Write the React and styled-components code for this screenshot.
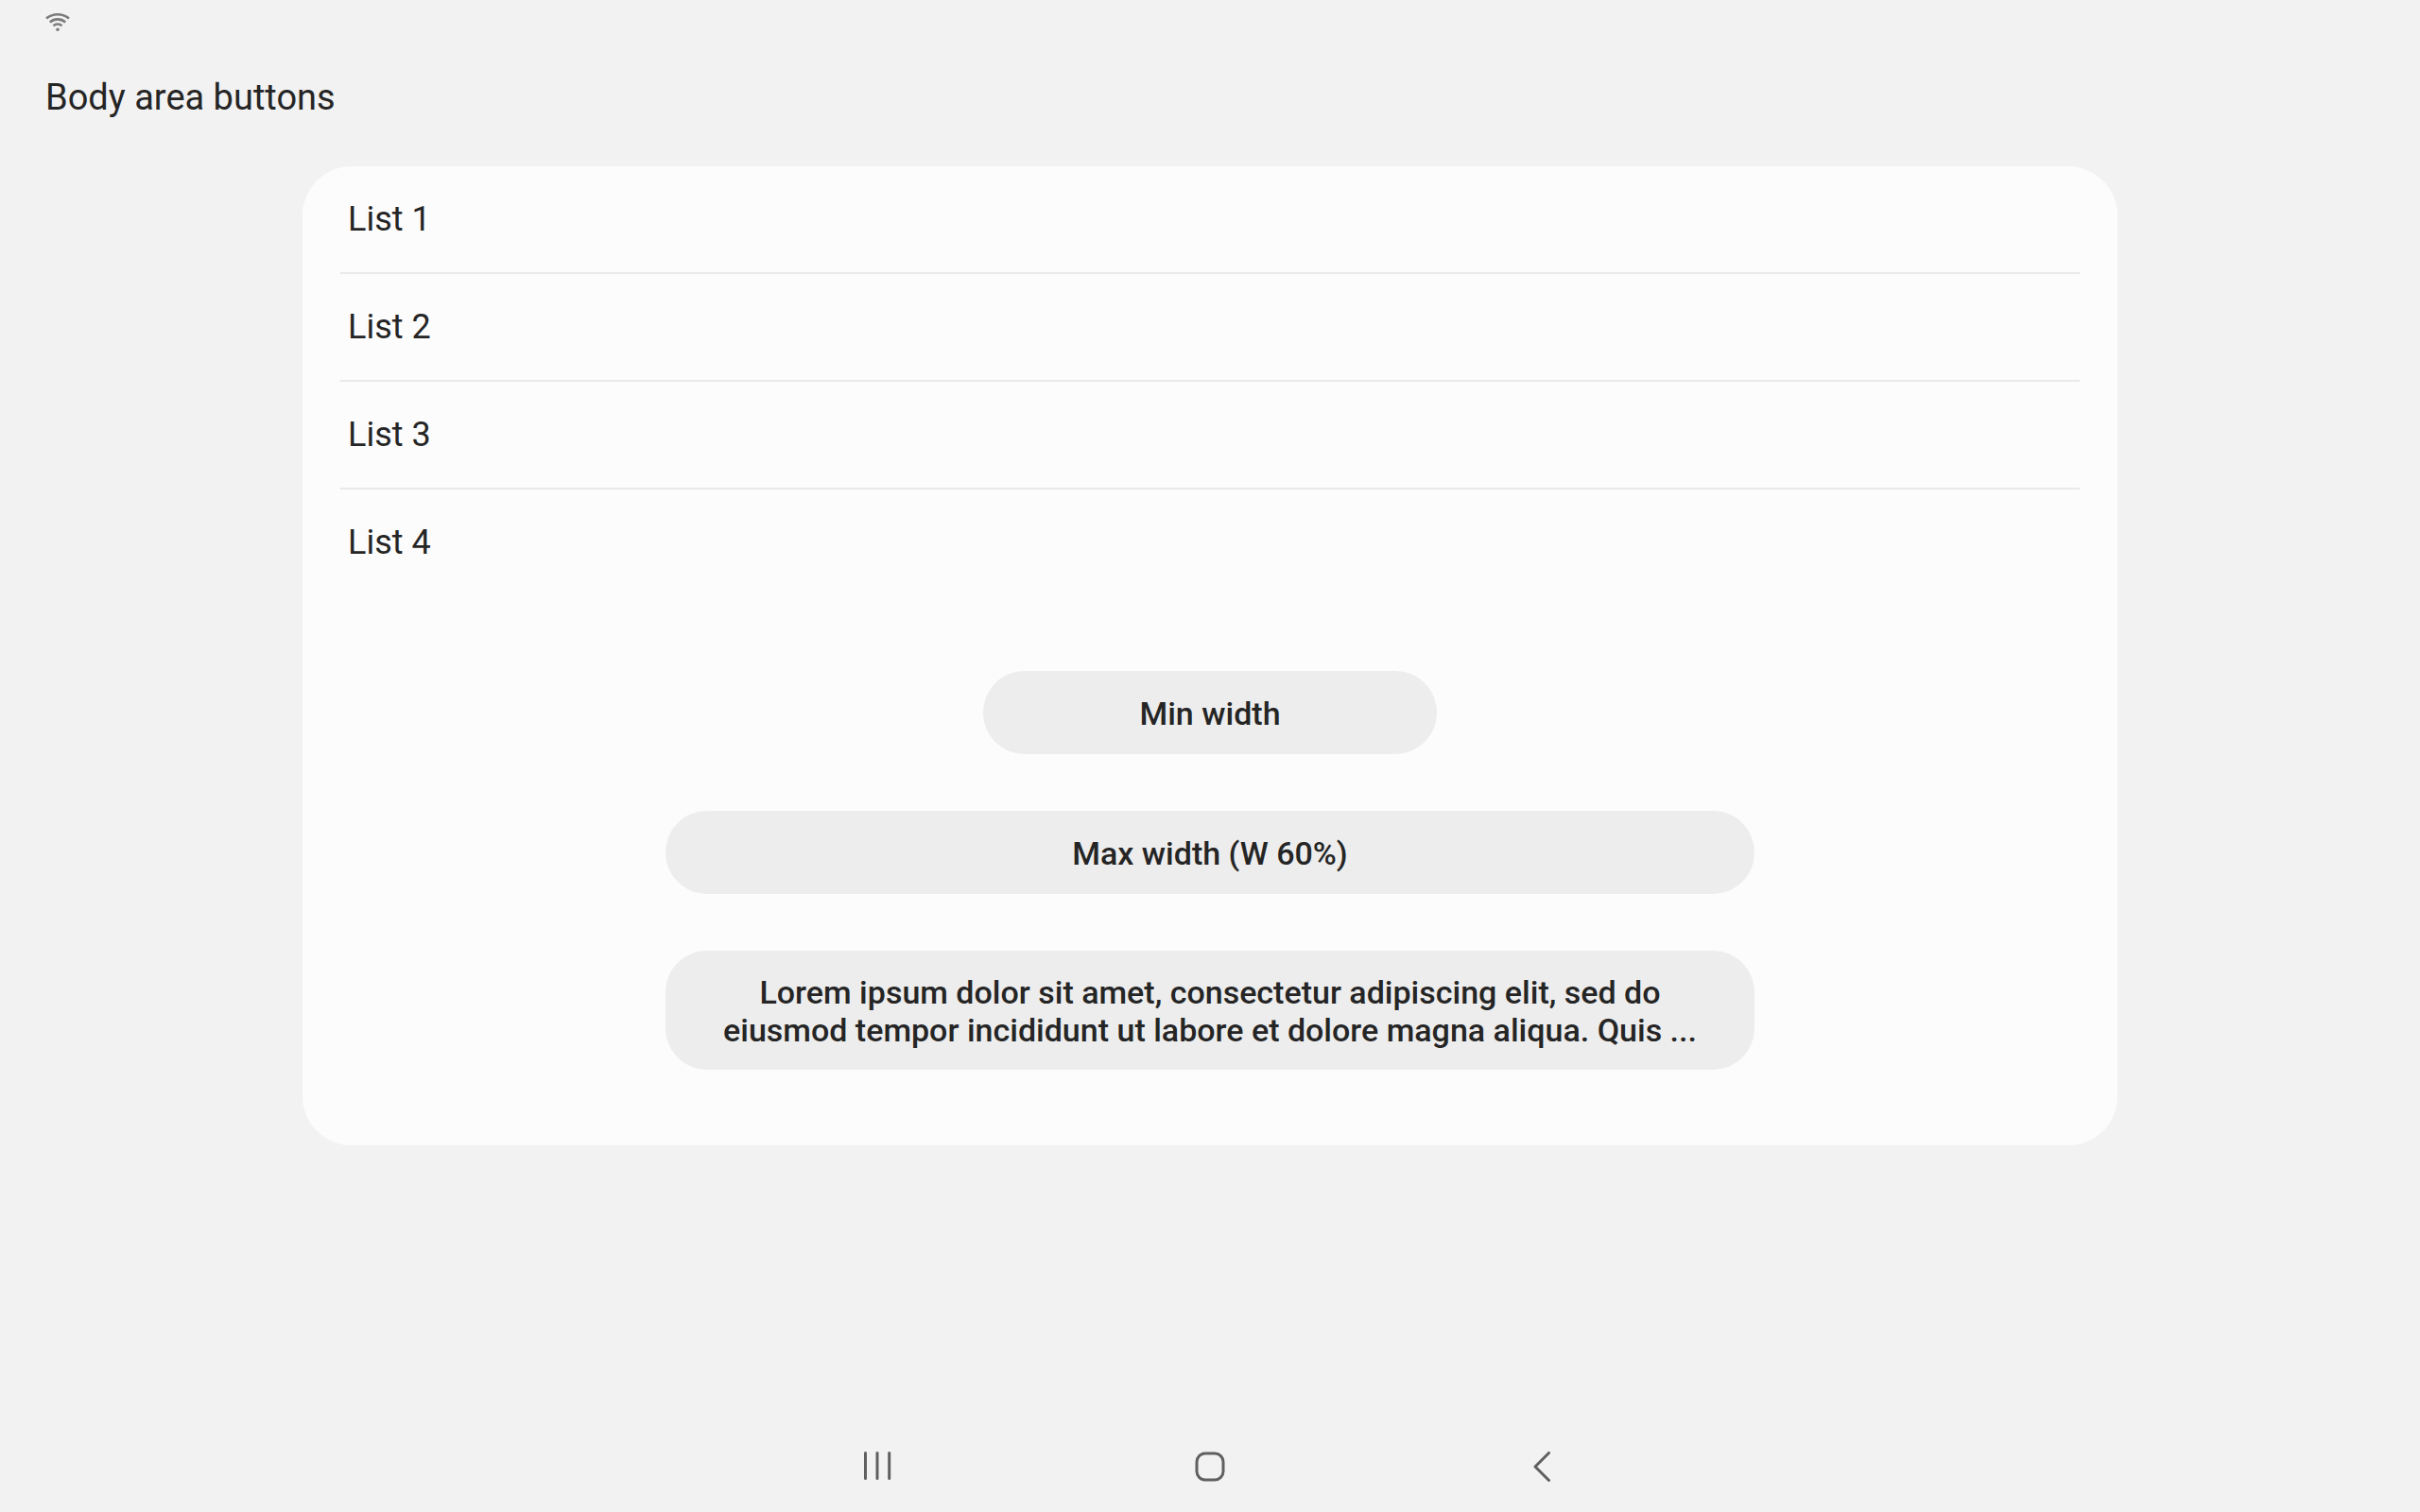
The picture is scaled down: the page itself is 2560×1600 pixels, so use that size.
import React from 'react';
import styled, { createGlobalStyle } from 'styled-components';

const GlobalStyle = createGlobalStyle`
  * { box-sizing: border-box; }
  body { margin: 0; background: #f2f2f2; color: #252525; font-family: Roboto, sans-serif; }
`;

const Screen = styled.div`
  min-height: 100vh;
  display: flex;
  flex-direction: column;
`;

const StatusBar = styled.header`
  padding: 12px 48px;
  svg { display: block; }
`;

const Title = styled.h1`
  margin: 0;
  padding: 32px 48px;
  font-size: 38px;
  line-height: 46px;
  font-weight: 400;
`;

const Card = styled.main`
  width: 75%;
  margin: 18px auto 0;
  padding-bottom: 80px;
  border-radius: 52px;
  background: #fcfcfc;
  display: flex;
  flex-direction: column;
  align-items: center;
`;

const List = styled.ul`
  align-self: stretch;
  margin: 0 0 80px;
  padding: 0 40px;
  list-style: none;
`;

const ListItem = styled.li`
  padding: 32px 8px;
  font-size: 36px;
  line-height: 48px;
  &:not(:last-child) { border-bottom: 2px solid #e9e9e9; }
`;

const Buttons = styled.div`
  align-self: stretch;
  display: flex;
  flex-direction: column;
  align-items: center;
  gap: 60px;
`;

const PillButton = styled.button`
  width: ${(p) => p.$width};
  min-height: 88px;
  padding: 24px 60px 22px;
  border: 0;
  border-radius: 44px;
  background: #ededed;
  color: #252525;
  font: 500 34px/40px Roboto, sans-serif;
`;

const NavBar = styled.nav`
  margin-top: auto;
  display: flex;
  justify-content: center;
  align-items: center;
  gap: 256px;
`;

const NavButton = styled.button`
  width: 96px;
  height: 96px;
  padding: 0;
  border: 0;
  background: none;
  svg { display: block; margin: 0 auto; }
`;

const NavIcon = styled.svg.attrs({ width: 32, height: 32, viewBox: '0 0 32 32' })`
  fill: none;
  stroke: #606060;
  stroke-width: 3;
  stroke-linecap: round;
  stroke-linejoin: round;
`;

const items = ['List 1', 'List 2', 'List 3', 'List 4'];

export default function App() {
  return (
    <Screen>
      <GlobalStyle />
      <StatusBar>
        <svg width="26" height="24" viewBox="0 0 26 24" fill="none" stroke="#7b7b7b" strokeWidth="2.6" role="img" aria-label="Wi-Fi connected">
          <path d="M1 7.6a18.8 18.8 0 0 1 24 0M4.8 11.5a12.4 12.4 0 0 1 16.4 0M8.5 15.4a6.4 6.4 0 0 1 9 0" />
          <circle cx="13" cy="19.3" r="1.8" fill="#7b7b7b" stroke="none" />
        </svg>
      </StatusBar>
      <Title>Body area buttons</Title>
      <Card>
        <List>{items.map((item) => <ListItem key={item}>{item}</ListItem>)}</List>
        <Buttons>
          <PillButton $width="480px">Min width</PillButton>
          <PillButton $width="60%">Max width (W 60%)</PillButton>
          <PillButton $width="60%">
            Lorem ipsum dolor sit amet, consectetur adipiscing elit, sed do eiusmod tempor incididunt ut labore et dolore magna aliqua. Quis ...
          </PillButton>
        </Buttons>
      </Card>
      <NavBar>
        <NavButton aria-label="Recent apps">
          <NavIcon><path d="M3.5 1.5v27M16 1.5v27M28.7 1.5v27" /></NavIcon>
        </NavButton>
        <NavButton aria-label="Home">
          <NavIcon><rect x="2" y="2" width="28" height="28" rx="9" /></NavIcon>
        </NavButton>
        <NavButton aria-label="Back">
          <NavIcon><path d="M22.5 1.5 8 16l14.5 14.5" /></NavIcon>
        </NavButton>
      </NavBar>
    </Screen>
  );
}
